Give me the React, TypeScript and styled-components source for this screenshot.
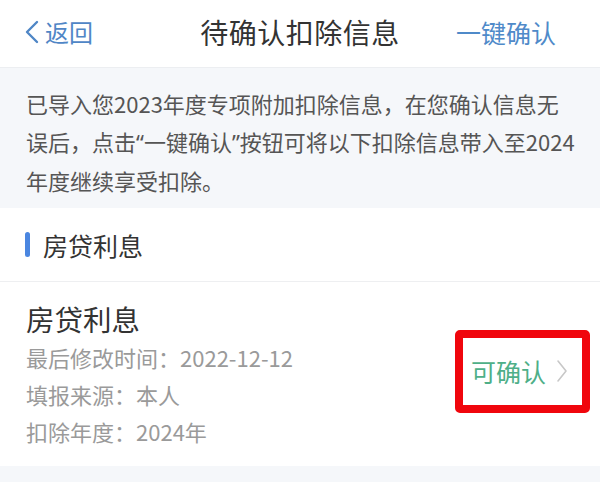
import React from "react";
import styled, { createGlobalStyle } from "styled-components";

const Global = createGlobalStyle`
  html, body { margin: 0; padding: 0; background: #f5f7fa; }
  body { font-family: "Noto Sans CJK SC", "Noto Sans", sans-serif; }
  * { box-sizing: border-box; }
`;

const Page = styled.div`
  width: 600px;
  height: 482px;
  overflow: hidden;
  background: #f5f7fa;
  display: flex;
  flex-direction: column;
`;

const NavBar = styled.div`
  height: 68px;
  flex-shrink: 0;
  background: #fff;
  display: grid;
  grid-template-columns: 1fr auto 1fr;
  align-items: center;
  padding: 0 22px 4px 22px;
  border-bottom: 1px solid #eceef1;
`;

const Back = styled.div`
  display: flex;
  align-items: center;
  gap: 5px;
  color: #4f86c6;
  font-size: 24px;
  padding-left: 2px;
`;

const Title = styled.div`
  font-size: 28px;
  color: #333;
  letter-spacing: 0.5px;
`;

const Action = styled.div`
  justify-self: end;
  margin-right: 22px;
  color: #4f8ac9;
  font-size: 25px;
`;

const Notice = styled.div`
  padding: 16px 20px 18px 26px;
  font-size: 22px;
  line-height: 38px;
  color: #555;
  height: 140px;
  flex-shrink: 0;
  white-space: nowrap;
`;

const Quote = styled.span`
  font-family: "Noto Sans", sans-serif;
`;

const Section = styled.div`
  background: #fff;
  height: 74px;
  flex-shrink: 0;
  display: flex;
  align-items: center;
  padding-left: 25px;
  gap: 13px;
  border-bottom: 1px solid #eeeff1;
`;

const Bar = styled.div`
  width: 5px;
  height: 25px;
  border-radius: 3px;
  background: #4a86e0;
`;

const SectionTitle = styled.div`
  font-size: 25px;
  color: #333;
`;

const Item = styled.div`
  background: #fff;
  height: 184px;
  flex-shrink: 0;
  display: flex;
  align-items: center;
  justify-content: space-between;
  padding: 0 10px 0 26px;
`;

const Info = styled.div`
  display: flex;
  flex-direction: column;
  padding-top: 2px;
`;

const ItemTitle = styled.div`
  font-size: 28.5px;
  color: #333;
  line-height: 38px;
  margin-bottom: 1px;
`;

const Meta = styled.div`
  font-size: 22px;
  color: #9a9a9a;
  line-height: 37px;
`;

const Highlight = styled.div`
  width: 135px;
  height: 83px;
  border: 8px solid #f0060d;
  border-radius: 5px;
  display: flex;
  align-items: center;
  padding-left: 8px;
  gap: 10px;
  margin-top: -6px;
`;

const Status = styled.span`
  color: #4eaf88;
  font-size: 25px;
`;

export default function App() {
  return (
    <>
      <Global />
      <Page>
        <NavBar>
          <Back>
            <svg width="16" height="24" viewBox="0 0 16 24" fill="none">
              <path d="M13 2 L3 12 L13 22" stroke="#4f86c6" strokeWidth="2.4" strokeLinecap="round" strokeLinejoin="round" />
            </svg>
            <span>返回</span>
          </Back>
          <Title>待确认扣除信息</Title>
          <Action>一键确认</Action>
        </NavBar>
        <Notice>
          已导入您2023年度专项附加扣除信息，在您确认信息无
          <br />
          误后，点击<Quote>“</Quote>一键确认<Quote>”</Quote>按钮可将以下扣除信息带入至2024
          <br />
          年度继续享受扣除。
        </Notice>
        <Section>
          <Bar />
          <SectionTitle>房贷利息</SectionTitle>
        </Section>
        <Item>
          <Info>
            <ItemTitle>房贷利息</ItemTitle>
            <Meta>最后修改时间：2022-12-12</Meta>
            <Meta>填报来源：本人</Meta>
            <Meta>扣除年度：2024年</Meta>
          </Info>
          <Highlight>
            <Status>可确认</Status>
            <svg width="12" height="24" viewBox="0 0 12 24" fill="none">
              <path d="M2 2 L10 12 L2 22" stroke="#c8c8c8" strokeWidth="1.6" strokeLinecap="round" strokeLinejoin="round" />
            </svg>
          </Highlight>
        </Item>
      </Page>
    </>
  );
}
